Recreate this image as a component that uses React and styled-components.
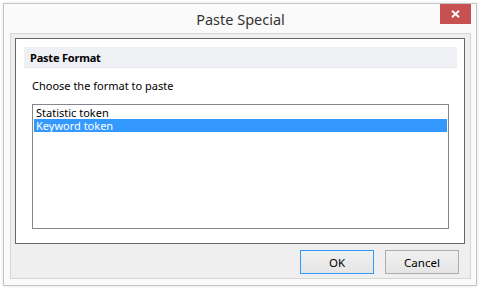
import React from "react";
import styled, { createGlobalStyle } from "styled-components";

const GlobalStyle = createGlobalStyle`
  html, body {
    margin: 0;
    padding: 0;
    background: #ffffff;
  }
  body {
    font-family: "Noto Sans", "Open Sans", sans-serif;
    font-size: 11px;
    color: #000;
  }
`;

const Page = styled.div`
  padding: 3px;
`;

const Window = styled.div`
  width: 474px;
  height: 283px;
  box-sizing: border-box;
  border: 1px solid #c4c4c4;
  background: #fafafa;
  box-shadow: 0 0 3px rgba(0, 0, 0, 0.12);
  display: flex;
  flex-direction: column;
  padding: 0 5px 6px 6px;
`;

const TitleBar = styled.div`
  height: 29px;
  flex: none;
  display: grid;
  grid-template-columns: 1fr auto 1fr;
  align-items: center;
  margin: 0 -5px 0 -6px;
  padding: 0 5px 0 6px;
`;

const Title = styled.div`
  grid-column: 2;
  font-size: 14.5px;
  color: #333;
  padding-top: 1px;
`;

const CloseButton = styled.button`
  grid-column: 3;
  justify-self: end;
  align-self: start;
  width: 31px;
  height: 20px;
  border: none;
  padding: 0;
  background: #c75050;
  display: flex;
  align-items: center;
  justify-content: center;
`;

const Client = styled.div`
  flex: 1;
  border: 1px solid #d6d6d6;
  background: #efefef;
  display: flex;
  flex-direction: column;
  padding: 4px 5px 0 4px;
`;

const Panel = styled.div`
  height: 206px;
  box-sizing: border-box;
  border: 1px solid #666;
  background: #fff;
  padding: 8px 7px 0 8px;
  display: flex;
  flex-direction: column;
`;

const SectionHeader = styled.div`
  height: 21px;
  background: #eef0f4;
  font-weight: bold;
  font-size: 11px;
  letter-spacing: -0.2px;
  display: flex;
  align-items: center;
  padding-left: 6px;
  border-bottom: 1px solid #e4e6ea;
  box-sizing: border-box;
`;

const Body = styled.div`
  padding: 0 8px;
  display: flex;
  flex-direction: column;
`;

const Prompt = styled.div`
  margin-top: 9px;
  height: 17px;
  line-height: 17px;
`;

const ListBox = styled.div`
  margin-top: 10px;
  height: 125px;
  box-sizing: border-box;
  border: 1px solid #828790;
  padding: 1px;
`;

const ListItem = styled.div`
  height: 13px;
  line-height: 13px;
  padding-left: 2px;
  background: ${(p) => (p.$selected ? "#3399ff" : "transparent")};
  color: ${(p) => (p.$selected ? "#fff" : "#000")};
`;

const Footer = styled.div`
  display: flex;
  justify-content: flex-end;
  gap: 11px;
  padding: 6px 6px 0 0;
`;

const Button = styled.button`
  width: 74px;
  height: 24px;
  box-sizing: border-box;
  border: 1px solid ${(p) => (p.$default ? "#3399ff" : "#adadad")};
  background: linear-gradient(#f0f0f0, #e5e5e5);
  font-family: "Noto Sans", "Open Sans", sans-serif;
  font-size: 11.5px;
  color: #000;
  padding: 0;
`;

const items = ["Statistic token", "Keyword token"];

export default function App() {
  return (
    <>
      <GlobalStyle />
      <Page>
        <Window>
          <TitleBar>
            <Title>Paste Special</Title>
            <CloseButton aria-label="Close">
              <svg width="9" height="8" viewBox="0 0 9 8">
                <path
                  d="M1 0.8 L8 7.2 M8 0.8 L1 7.2"
                  stroke="#fff"
                  strokeWidth="1.9"
                  fill="none"
                />
              </svg>
            </CloseButton>
          </TitleBar>
          <Client>
            <Panel>
              <SectionHeader>Paste Format</SectionHeader>
              <Body>
                <Prompt>Choose the format to paste</Prompt>
                <ListBox>
                  {items.map((it, i) => (
                    <ListItem key={it} $selected={i === 1}>
                      {it}
                    </ListItem>
                  ))}
                </ListBox>
              </Body>
            </Panel>
            <Footer>
              <Button $default>OK</Button>
              <Button>Cancel</Button>
            </Footer>
          </Client>
        </Window>
      </Page>
    </>
  );
}
